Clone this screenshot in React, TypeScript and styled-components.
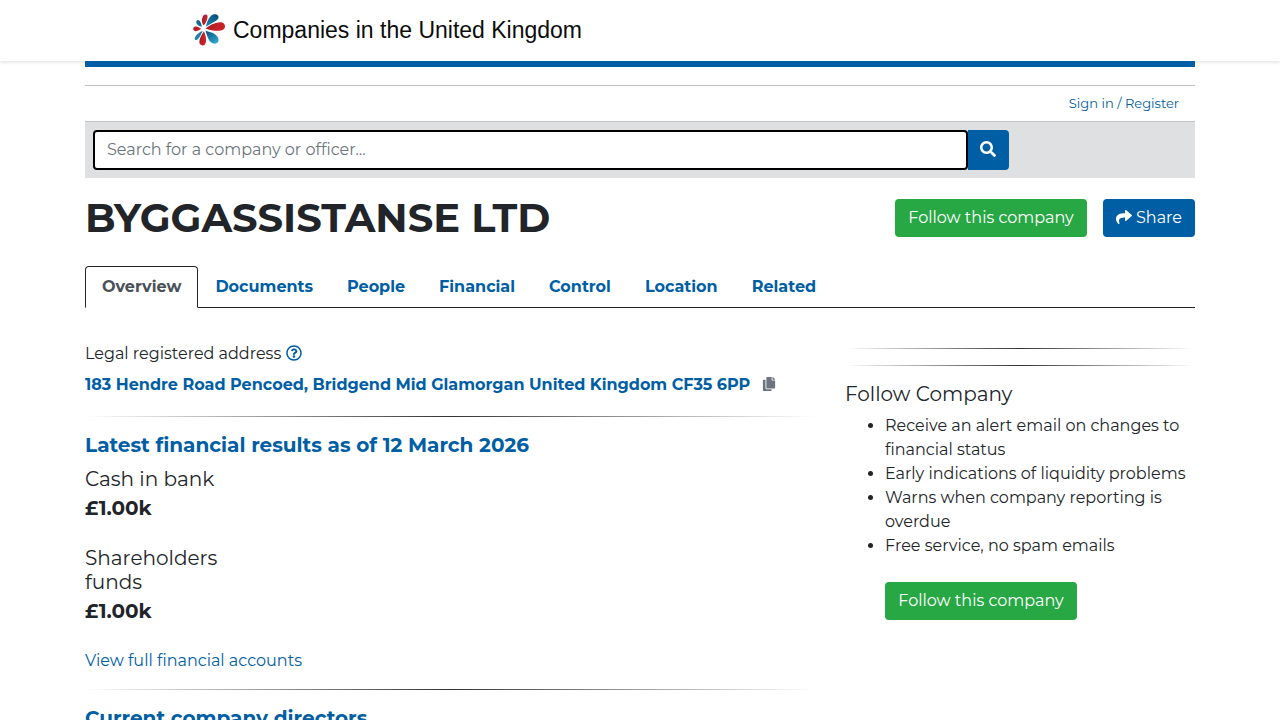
import React from "react";
import styled, { createGlobalStyle } from "styled-components";
import { FaSearch, FaShare, FaRegQuestionCircle, FaCopy } from "react-icons/fa";

const blue = "#005ea5";
const green = "#28a745";
const ink = "#212529";

const GlobalStyle = createGlobalStyle`
  *, *::before, *::after { box-sizing: border-box; }
  body {
    margin: 0;
    background: #fff;
    color: ${ink};
    font: 400 16px/24px Montserrat, Inter, "Open Sans", sans-serif;
  }
  a { color: ${blue}; text-decoration: none; }
  a:hover { text-decoration: underline; }
  h1, h2, h3, p, ul, dl, dd { margin: 0; padding: 0; }
`;

const Header = styled.header`
  background: #fff;
  box-shadow: 0 1px 4px rgba(0, 0, 0, 0.13);
`;

const Container = styled.div`
  width: 100%;
  max-width: 1140px;
  margin: 0 auto;
  padding: 0 15px;
`;

const Brand = styled.a`
  display: flex;
  align-items: center;
  gap: 7px;
  height: 61px;
  padding: 0 0 2px 107px;
  color: #0b0c0c;
  font: 400 23px/30px "Liberation Sans", Arial, sans-serif;
`;

const TopBar = styled.div`
  height: 6px;
  margin-bottom: 18px;
  background: ${blue};
`;

const AccountRow = styled.nav`
  display: flex;
  justify-content: flex-end;
  padding: 5px 16px 6px;
  border: solid #bfc1c3;
  border-width: 1px 0;
  font-size: 13px;
`;

const SearchBar = styled.form`
  display: flex;
  padding: 8px;
  background: #dee0e2;
`;

const SearchInput = styled.input`
  flex: 0 1 875px;
  min-width: 0;
  height: 40px;
  padding: 0 12px 2px;
  border: 2px solid #000;
  border-radius: 4px;
  outline: 0;
  background: #fff;
  font: inherit;
  color: #495057;
  &::placeholder { color: #6c757d; opacity: 1; }
`;

const SearchButton = styled.button`
  display: flex;
  align-items: center;
  justify-content: center;
  width: 41px;
  height: 40px;
  padding: 0 2px 2px 0;
  border: 0;
  border-radius: 0 4px 4px 0;
  background: ${blue};
  color: #fff;
  font-size: 16px;
`;

const TitleRow = styled.div`
  display: flex;
  align-items: center;
  gap: 16px;
  margin: 16px 0 24px;
`;

const Title = styled.h1`
  flex: 1;
  font-size: 40px;
  line-height: 48px;
  font-weight: 700;
`;

const Button = styled.button<{ $tone: string; $width: number }>`
  display: inline-flex;
  align-items: center;
  justify-content: center;
  gap: 4px;
  width: ${(p) => p.$width}px;
  height: 38px;
  padding: 0;
  border: 0;
  border-radius: 4px;
  background: ${(p) => p.$tone};
  color: #fff;
  font: inherit;
  svg { margin-bottom: 2px; }
`;

const Tabs = styled.nav`
  display: flex;
  border-bottom: 1px solid ${ink};
`;

const Tab = styled.a<{ $active?: boolean }>`
  margin-bottom: -1px;
  padding: 8px 16px;
  border: 1px solid ${(p) => (p.$active ? ink : "transparent")};
  border-bottom-color: ${(p) => (p.$active ? "#fff" : "transparent")};
  border-radius: 4px 4px 0 0;
  background: ${(p) => (p.$active ? "#fff" : "transparent")};
  color: ${(p) => (p.$active ? "#495057" : blue)};
  font-weight: 700;
`;

const Columns = styled.main`
  display: grid;
  grid-template-columns: minmax(0, 730fr) minmax(0, 350fr);
  gap: 30px;
`;

const Overview = styled.section`
  padding-top: 34px;
`;

const Aside = styled.aside`
  padding-top: 24px;
`;

const Rule = styled.hr`
  height: 1px;
  margin: 16px 0;
  border: 0;
  background: linear-gradient(to right, transparent, #333, transparent);
`;

const AddressLabel = styled.p`
  display: flex;
  align-items: center;
  gap: 5px;
  margin-bottom: 7px;
  svg { margin-bottom: 2px; color: ${blue}; }
`;

const Address = styled.p`
  display: flex;
  align-items: center;
  gap: 12px;
  margin-bottom: 19px;
  font-weight: 700;
  svg { margin-bottom: 2px; color: #6c757d; font-size: 14px; }
`;

const SectionTitle = styled.h2`
  font-size: 20px;
  line-height: 24px;
  font-weight: 700;
`;

const Figures = styled.dl`
  display: grid;
  gap: 26px;
  margin: 10px 0 26px;
  font-size: 20px;
  line-height: 24px;
`;

const Figure = styled.div`
  width: 152px;
  dt { margin-bottom: 5px; }
  dd { font-weight: 700; }
`;

const AsideTitle = styled.h3`
  margin-bottom: 8px;
  font-size: 20px;
  line-height: 24px;
  font-weight: 400;
`;

const Benefits = styled.ul`
  padding-left: 40px;
  margin-bottom: 24px;
`;

const AsideAction = styled.div`
  padding-left: 40px;
`;

function Logo() {
  return (
    <svg width="34" height="34" viewBox="35 24 103 103" aria-hidden="true">
      <defs>
        <linearGradient id="red" x1="0" y1="0" x2="1" y2="0.3">
          <stop offset="0" stopColor="#8f1a22" />
          <stop offset="0.6" stopColor="#c32129" />
          <stop offset="1" stopColor="#c9222a" />
        </linearGradient>
        <linearGradient id="navy" x1="1" y1="0" x2="0" y2="1">
          <stop offset="0" stopColor="#064a76" />
          <stop offset="1" stopColor="#1b89b3" />
        </linearGradient>
        <linearGradient id="sky" x1="0" y1="0" x2="0.6" y2="1">
          <stop offset="0" stopColor="#064f7c" />
          <stop offset="1" stopColor="#2ba3cb" />
        </linearGradient>
      </defs>
      <path fill="url(#red)" d="M76 71 C88 61 103 53 119 52 C129 51 135 57 135 65 C134 75 125 78 113 78 C100 78 88 75 76 71Z" />
      <path fill="url(#navy)" d="M77 66 C79 54 84 41 92 33 C98 26 109 26 114 32 C118 38 113 44 105 49 C96 55 86 60 77 66Z" />
      <path fill="url(#red)" d="M70 62 C65 54 63 46 67 37 C69 29 76 27 80 30 C84 32 82 39 80 45 C78 52 75 57 70 62Z" />
      <path fill="url(#navy)" d="M65 66 C57 64 50 60 48 54 C47 47 52 43 57 47 C62 51 63 58 65 66Z" />
      <path fill="url(#red)" d="M63 72 C55 77 47 81 42 78 C37 75 38 68 43 66 C49 63 57 68 63 72Z" />
      <path fill="url(#sky)" d="M67 78 C63 89 58 100 51 105 C46 108 42 104 44 99 C47 90 58 83 67 78Z" />
      <path fill="url(#red)" d="M71 79 C76 89 79 102 77 112 C75 121 70 124 65 122 C58 120 56 114 58 106 C60 96 66 87 71 79Z" />
      <path fill="url(#sky)" d="M76 78 C89 81 105 86 112 96 C118 105 116 113 108 116 C99 119 90 113 86 105 C82 96 78 87 76 78Z" />
    </svg>
  );
}

const tabs = ["Overview", "Documents", "People", "Financial", "Control", "Location", "Related"];

const figures = [
  { label: "Cash in bank", value: "£1.00k" },
  { label: "Shareholders funds", value: "£1.00k" },
];

const benefits = [
  "Receive an alert email on changes to financial status",
  "Early indications of liquidity problems",
  "Warns when company reporting is overdue",
  "Free service, no spam emails",
];

export default function App() {
  return (
    <>
      <GlobalStyle />
      <Header>
        <Container>
          <Brand href="#">
            <Logo />
            Companies in the United Kingdom
          </Brand>
        </Container>
      </Header>
      <Container>
        <TopBar />
        <AccountRow>
          <a href="#account">Sign in / Register</a>
        </AccountRow>
        <SearchBar>
          <SearchInput type="text" aria-label="Search" placeholder="Search for a company or officer..." />
          <SearchButton type="submit" aria-label="Search">
            <FaSearch />
          </SearchButton>
        </SearchBar>
        <TitleRow>
          <Title>BYGGASSISTANSE LTD</Title>
          <Button type="button" $tone={green} $width={192}>Follow this company</Button>
          <Button type="button" $tone={blue} $width={92}>
            <FaShare />
            Share
          </Button>
        </TitleRow>
        <Tabs>
          {tabs.map((name, i) => (
            <Tab key={name} href={`#${name.toLowerCase()}`} $active={i === 0}>
              {name}
            </Tab>
          ))}
        </Tabs>
        <Columns>
          <Overview>
            <AddressLabel>
              Legal registered address <FaRegQuestionCircle />
            </AddressLabel>
            <Address>
              <a href="#location">183 Hendre Road Pencoed, Bridgend Mid Glamorgan United Kingdom CF35 6PP</a>
              <FaCopy />
            </Address>
            <Rule />
            <SectionTitle>
              <a href="#financial">Latest financial results as of 12 March 2026</a>
            </SectionTitle>
            <Figures>
              {figures.map((f) => (
                <Figure key={f.label}>
                  <dt>{f.label}</dt>
                  <dd>{f.value}</dd>
                </Figure>
              ))}
            </Figures>
            <a href="#accounts">View full financial accounts</a>
            <Rule />
            <SectionTitle>
              <a href="#people">Current company directors</a>
            </SectionTitle>
          </Overview>
          <Aside>
            <Rule />
            <Rule />
            <AsideTitle>Follow Company</AsideTitle>
            <Benefits>
              {benefits.map((b) => (
                <li key={b}>{b}</li>
              ))}
            </Benefits>
            <AsideAction>
              <Button type="button" $tone={green} $width={192}>Follow this company</Button>
            </AsideAction>
          </Aside>
        </Columns>
      </Container>
    </>
  );
}
